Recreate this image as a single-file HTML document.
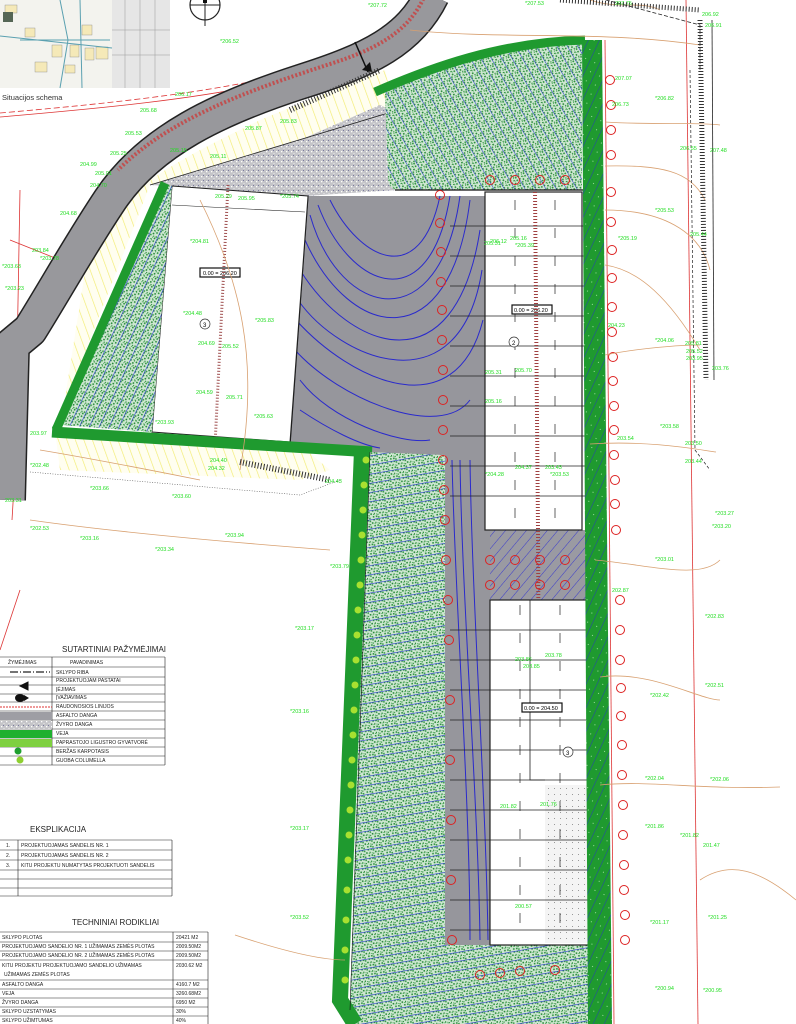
<!DOCTYPE html>
<html><head><meta charset="utf-8"><style>
html,body{margin:0;padding:0;background:#fff;width:796px;height:1024px;overflow:hidden}
svg{display:block}
.g{fill:#22dd22;font-family:"Liberation Sans",sans-serif;font-size:5.5px}
.t{font-family:"Liberation Sans",sans-serif;font-size:5px;fill:#222}
.h{font-family:"Liberation Sans",sans-serif;font-size:8px;fill:#222}
</style></head><body>
<svg width="796" height="1024" viewBox="0 0 796 1024" xmlns="http://www.w3.org/2000/svg">
<defs>
<pattern id="grass" width="6" height="6" patternUnits="userSpaceOnUse">
<rect width="6" height="6" fill="#cfe8d2"/>
<rect x="0" y="0" width="1.6" height="1.6" fill="#2f8f40"/><rect x="3" y="2" width="1.6" height="1.6" fill="#2a8a3a"/>
<rect x="1" y="4" width="1.6" height="1.6" fill="#3a9a4a"/><rect x="4.5" y="4.5" width="1.2" height="1.2" fill="#2a8a3a"/><rect x="4" y="0" width="1" height="1" fill="#4aaa55"/>
</pattern>
<pattern id="hatchA" width="9" height="9" patternUnits="userSpaceOnUse" patternTransform="rotate(25)">
<rect width="9" height="9" fill="url(#grass)"/><line x1="0" y1="0" x2="0" y2="9" stroke="#2233cc" stroke-width="1.2"/>
</pattern>
<pattern id="hatchB" width="9" height="9" patternUnits="userSpaceOnUse" patternTransform="rotate(-30)">
<rect width="9" height="9" fill="url(#grass)"/><line x1="0" y1="0" x2="0" y2="9" stroke="#2233cc" stroke-width="1"/>
</pattern>
<pattern id="hatchC" width="9" height="9" patternUnits="userSpaceOnUse" patternTransform="rotate(80)">
<rect width="9" height="9" fill="url(#grass)"/><line x1="0" y1="0" x2="0" y2="9" stroke="#2233cc" stroke-width="1.2"/>
</pattern>
<pattern id="dg" width="10" height="10" patternUnits="userSpaceOnUse" patternTransform="rotate(25)">
<rect width="10" height="10" fill="#1f9a2f"/><line x1="0" y1="0" x2="0" y2="10" stroke="#2840b0" stroke-width="1"/><rect x="5" y="5" width="1" height="1" fill="#9fe09f"/>
</pattern>
<pattern id="gravel" width="5" height="5" patternUnits="userSpaceOnUse">
<rect width="5" height="5" fill="#c4c4c8"/><rect x="1" y="1" width="1.3" height="1.3" fill="#fff"/><rect x="3.5" y="3" width="1" height="1" fill="#eee"/><rect x="3" y="0" width="1" height="1" fill="#7a7aa0"/>
</pattern>
<pattern id="yel" width="8" height="8" patternUnits="userSpaceOnUse" patternTransform="rotate(-20)">
<rect width="8" height="8" fill="#fffef0"/><line x1="0" y1="0" x2="0" y2="8" stroke="#f2ec70" stroke-width="1.3"/>
</pattern>
<pattern id="gh" width="8" height="8" patternUnits="userSpaceOnUse" patternTransform="rotate(40)">
<rect width="8" height="8" fill="#9a9aa2"/><line x1="0" y1="0" x2="0" y2="8" stroke="#3a3acc" stroke-width="1"/>
</pattern>
<pattern id="dots" width="6" height="6" patternUnits="userSpaceOnUse">
<rect width="6" height="6" fill="#f4f4f4"/><rect x="2" y="2" width="1" height="1" fill="#999"/>
</pattern>
</defs>

<rect x="0" y="0" width="170" height="88" fill="#f3f3ee"/>
<rect x="112" y="0" width="58" height="88" fill="#e6e6e6"/>
<g fill="#f5e9b8" stroke="#888" stroke-width=".4">
<rect x="5" y="5" width="12" height="8"/><rect x="25" y="28" width="10" height="9"/><rect x="52" y="45" width="10" height="12"/><rect x="70" y="45" width="9" height="12"/><rect x="82" y="25" width="10" height="10"/><rect x="85" y="48" width="9" height="12"/><rect x="96" y="47" width="12" height="12"/><rect x="35" y="62" width="12" height="10"/><rect x="65" y="65" width="10" height="8"/>
</g>
<rect x="3" y="12" width="10" height="10" fill="#556655"/>
<g stroke="#5aa0b0" stroke-width="1" fill="none"><path d="M60 0 L68 40 L60 88"/><path d="M20 40 L110 40"/><path d="M80 0 L82 88"/><path d="M0 36 L112 48"/></g>
<g stroke="#999" stroke-width=".5" fill="none"><path d="M125 0V88M140 0V88M155 0V88M112 30H170M112 55H170"/></g>
<text x="2" y="100" font-family="Liberation Sans,sans-serif" font-size="7.5" fill="#333">Situacijos schema</text>

<circle cx="205" cy="5" r="15" fill="none" stroke="#222" stroke-width="1.2"/>
<path d="M190 5H220M205 -12V26" stroke="#222" stroke-width="1"/>
<rect x="203" y="-10" width="4" height="13" fill="#111"/>

<g fill="none" stroke="#dd3333" stroke-width=".8">
<path d="M0 117 C80 110 200 100 280 80 C330 70 390 40 440 0"/>
<path d="M0 113 C80 106 200 95 280 75 C330 62 380 35 430 0" stroke-dasharray="6 3"/>
<path d="M686 0 L698 1024"/>
<path d="M20 190 L15 470 L12 520"/>
<path d="M10 240 L60 260"/>
</g>

<path d="M90 240 C130 180 200 150 260 120 C320 95 360 80 385 70 L395 110 L150 185 L55 430 L60 470 L300 480 L330 470 L300 445 L60 430 Z" fill="url(#yel)"/>
<path d="M150 185 L300 140 L380 105 L395 112 L398 190 L305 196 L172 186 Z" fill="url(#gravel)"/>
<path d="M150 185 L398 110" stroke="#222" stroke-width=".8"/>

<g fill="none" stroke-linejoin="round">
<path d="M432 -5 C410 40 370 60 300 82 C220 108 150 140 110 200 C80 245 55 290 30 330 L12 345 L8 500" stroke="#222" stroke-width="36"/>
<path d="M432 -5 C410 40 370 60 300 82 C220 108 150 140 110 200 C80 245 55 290 30 330 L12 345 L8 500" stroke="#98989c" stroke-width="33"/>
<path d="M425 -5 C410 30 380 48 330 64 C250 90 170 118 118 170" stroke="#c05050" stroke-width="4" stroke-dasharray="2 2"/>
</g>
<path d="M355 42 L368 72" stroke="#111" stroke-width="1.5"/><path d="M362 70 L372 72 L370 62 Z" fill="#111"/>

<path d="M385 92 C430 70 500 45 582 40 L582 190 L400 190 Q388 190 388 178 Z" fill="url(#hatchB)"/>
<path d="M375 92 C430 68 500 42 585 40" fill="none" stroke="#1f9a2f" stroke-width="9"/>
<path d="M395 190 H590" stroke="#111" stroke-width="1.2"/>

<path d="M308 196 L485 196 L485 530 L590 530 L590 600 L490 600 L490 945 L445 945 L445 455 L370 455 L345 448 L290 445 Z" fill="#96969c"/>
<rect x="485" y="530" width="105" height="70" fill="url(#gh)"/>
<rect x="445" y="455" width="45" height="490" fill="#96969c"/>
<g fill="none" stroke="#2a2acc" stroke-width="1">
<path d="M330 200 C360 260 420 290 440 196"/><path d="M318 205 C350 290 430 320 450 196"/><path d="M310 215 C340 320 440 340 460 196"/><path d="M305 240 C350 340 450 360 470 200"/><path d="M300 270 C350 350 455 390 480 230"/><path d="M298 300 C340 360 460 410 482 270"/><path d="M296 320 C350 380 455 430 483 320"/><path d="M295 350 C340 400 440 440 470 400"/><path d="M300 380 C330 420 400 445 430 440"/><path d="M300 410 C330 430 360 445 380 448"/>
<path d="M452 460 C455 600 470 800 470 940"/><path d="M460 460 C462 600 478 800 480 940"/><path d="M470 460 C472 600 486 800 488 940"/>
</g>
<path d="M308 196 L290 445" stroke="#111" stroke-width="1.2"/>
<g fill="#111"><path d="M300 230 l-6 3 6 3z"/><path d="M298 265 l-6 3 6 3z"/><path d="M296 300 l-6 3 6 3z"/><path d="M295 335 l-6 3 6 3z"/><path d="M293 370 l-6 3 6 3z"/><path d="M292 405 l-6 3 6 3z"/></g>

<path d="M172 186 L308 196 L290 442 L152 432 Z" fill="#fff" stroke="#222" stroke-width="1"/>
<path d="M172 205 L305 212" stroke="#222" stroke-width=".6"/>
<rect x="200" y="268" width="40" height="9" fill="#fff" stroke="#111" stroke-width="1.2"/>
<text x="203" y="275" font-family="Liberation Sans,sans-serif" font-size="5.5">0.00 = 206.20</text>
<circle cx="205" cy="324" r="5" fill="#fff" stroke="#333" stroke-width=".7"/><text x="203" y="327" font-family="Liberation Sans" font-size="6">3</text>
<path d="M228 185 L215 445" stroke="#a05050" stroke-width="3" stroke-dasharray="1 2" fill="none"/>

<path d="M165 185 L172 186 L152 432 L60 425 Z" fill="url(#hatchA)"/>
<path d="M165 183 L56 430" stroke="#1f9a2f" stroke-width="9"/>
<path d="M52 432 L372 452" stroke="#1f9a2f" stroke-width="11"/>

<path d="M368 452 L445 455 L445 945 L490 945 L590 945 L590 1024 L345 1024 L350 1000 Z" fill="url(#hatchC)"/>
<path d="M362 450 L340 1000 L355 1024" fill="none" stroke="#1f9a2f" stroke-width="16"/>
<path d="M370 452 L350 1010" stroke="#111" stroke-width=".6"/>
<g fill="#a8e030"><circle cx="366" cy="460" r="3.5"/><circle cx="364" cy="485" r="3.5"/><circle cx="363" cy="510" r="3.5"/><circle cx="362" cy="535" r="3.5"/><circle cx="361" cy="560" r="3.5"/><circle cx="360" cy="585" r="3.5"/><circle cx="358" cy="610" r="3.5"/><circle cx="357" cy="635" r="3.5"/><circle cx="356" cy="660" r="3.5"/><circle cx="355" cy="685" r="3.5"/><circle cx="354" cy="710" r="3.5"/><circle cx="353" cy="735" r="3.5"/><circle cx="352" cy="760" r="3.5"/><circle cx="351" cy="785" r="3.5"/><circle cx="350" cy="810" r="3.5"/><circle cx="349" cy="835" r="3.5"/><circle cx="348" cy="860" r="3.5"/><circle cx="347" cy="890" r="3.5"/><circle cx="346" cy="920" r="3.5"/><circle cx="345" cy="950" r="3.5"/><circle cx="345" cy="980" r="3.5"/></g>

<rect x="485" y="192" width="97" height="338" fill="#fff" stroke="#222" stroke-width="1.2"/>
<g stroke="#222" stroke-width=".7">
<path d="M450 226H600M450 256H600M450 286H600M450 316H600M450 346H600M450 376H600M450 406H600M450 436H600M450 466H600M450 496H600"/>
<path d="M515 200V520M555 200V520" stroke-dasharray="10 18"/>
</g>
<rect x="512" y="305" width="40" height="9" fill="#fff" stroke="#111" stroke-width="1.2"/>
<text x="514" y="312" font-family="Liberation Sans,sans-serif" font-size="5.5">0.00 = 206.20</text>
<circle cx="514" cy="342" r="5" fill="#fff" stroke="#333" stroke-width=".7"/><text x="512" y="345" font-family="Liberation Sans" font-size="6">2</text>
<path d="M535 192 L538 530 L540 945" stroke="#a04040" stroke-width="4" stroke-dasharray="1 2" fill="none"/>

<rect x="490" y="600" width="100" height="345" fill="#fff" stroke="#222" stroke-width="1.2"/>
<rect x="545" y="785" width="45" height="158" fill="url(#dots)"/>
<g stroke="#222" stroke-width=".7">
<path d="M450 630H600M450 660H600M450 690H600M450 720H600M450 750H600M450 780H600M450 810H600M450 840H600M450 870H600M450 900H600M450 930H600"/>
<path d="M520 605V940M560 605V940" stroke-dasharray="10 18"/>
</g>
<path d="M530 600V780H545" fill="none" stroke="#222" stroke-width=".8"/>
<rect x="522" y="703" width="40" height="9" fill="#fff" stroke="#111" stroke-width="1.2"/>
<text x="524" y="710" font-family="Liberation Sans,sans-serif" font-size="5.5">0.00 = 204.50</text>
<circle cx="568" cy="752" r="5" fill="#fff" stroke="#333" stroke-width=".7"/><text x="566" y="755" font-family="Liberation Sans" font-size="6">3</text>

<path d="M582 40 L602 40 L612 1024 L588 1024 Z" fill="url(#dg)"/>
<path d="M605 40 L614 1024" stroke="#dd3333" stroke-width=".8"/>

<g fill="none" stroke="#dd2222" stroke-width="1">
<circle cx="610" cy="80" r="4.5"/><circle cx="611" cy="105" r="4.5"/><circle cx="611" cy="130" r="4.5"/><circle cx="611" cy="155" r="4.5"/><circle cx="611" cy="192" r="4.5"/><circle cx="611" cy="222" r="4.5"/><circle cx="612" cy="250" r="4.5"/><circle cx="612" cy="278" r="4.5"/><circle cx="612" cy="307" r="4.5"/><circle cx="612" cy="332" r="4.5"/><circle cx="613" cy="357" r="4.5"/><circle cx="613" cy="381" r="4.5"/><circle cx="614" cy="406" r="4.5"/><circle cx="614" cy="430" r="4.5"/><circle cx="614" cy="455" r="4.5"/><circle cx="615" cy="480" r="4.5"/><circle cx="615" cy="504" r="4.5"/><circle cx="616" cy="530" r="4.5"/><circle cx="620" cy="600" r="4.5"/><circle cx="620" cy="630" r="4.5"/><circle cx="620" cy="660" r="4.5"/><circle cx="621" cy="688" r="4.5"/><circle cx="621" cy="716" r="4.5"/><circle cx="622" cy="745" r="4.5"/><circle cx="622" cy="775" r="4.5"/><circle cx="623" cy="805" r="4.5"/><circle cx="623" cy="835" r="4.5"/><circle cx="624" cy="865" r="4.5"/><circle cx="624" cy="890" r="4.5"/><circle cx="625" cy="915" r="4.5"/><circle cx="625" cy="940" r="4.5"/>
<circle cx="440" cy="195" r="4.5"/><circle cx="440" cy="223" r="4.5"/><circle cx="441" cy="252" r="4.5"/><circle cx="441" cy="282" r="4.5"/><circle cx="442" cy="310" r="4.5"/><circle cx="442" cy="340" r="4.5"/><circle cx="443" cy="370" r="4.5"/><circle cx="443" cy="400" r="4.5"/><circle cx="443" cy="430" r="4.5"/>
<circle cx="443" cy="460" r="4.5"/><circle cx="444" cy="490" r="4.5"/><circle cx="445" cy="520" r="4.5"/><circle cx="446" cy="560" r="4.5"/><circle cx="448" cy="600" r="4.5"/><circle cx="449" cy="640" r="4.5"/><circle cx="450" cy="700" r="4.5"/><circle cx="450" cy="760" r="4.5"/><circle cx="451" cy="820" r="4.5"/><circle cx="451" cy="880" r="4.5"/><circle cx="452" cy="940" r="4.5"/>
<circle cx="490" cy="180" r="4.5"/><circle cx="515" cy="180" r="4.5"/><circle cx="540" cy="180" r="4.5"/><circle cx="565" cy="180" r="4.5"/>
<circle cx="490" cy="560" r="4.5"/><circle cx="515" cy="560" r="4.5"/><circle cx="540" cy="560" r="4.5"/><circle cx="565" cy="560" r="4.5"/><circle cx="490" cy="585" r="4.5"/><circle cx="515" cy="585" r="4.5"/><circle cx="540" cy="585" r="4.5"/><circle cx="565" cy="585" r="4.5"/>
<circle cx="480" cy="975" r="4.5"/><circle cx="500" cy="973" r="4.5"/><circle cx="520" cy="971" r="4.5"/><circle cx="555" cy="970" r="4.5"/>
</g>

<g fill="none" stroke="#d8a070" stroke-width=".8">
<path d="M590 0 C620 10 640 0 660 10"/><path d="M410 30 C500 40 600 30 700 45"/><path d="M605 122 C650 125 700 122 720 125"/><path d="M605 166 C660 165 690 170 705 200"/><path d="M605 210 C660 210 700 230 710 270"/><path d="M605 265 C640 270 670 300 700 350"/><path d="M605 355 C640 348 680 345 700 345"/><path d="M590 444 C650 440 700 450 716 452"/><path d="M595 560 C650 565 700 580 720 560"/><path d="M600 677 C650 670 700 700 720 700"/><path d="M600 785 C650 780 700 790 780 787"/>
<path d="M40 450 C100 460 150 470 200 480"/><path d="M30 520 C100 530 200 540 330 550"/><path d="M200 200 C240 280 260 360 240 470"/><path d="M700 880 C730 860 760 870 796 900"/><path d="M235 935 C280 950 320 960 345 960"/>
</g>
<path d="M606 0 L700 25 L700 70" fill="none" stroke="#222" stroke-width=".8" stroke-dasharray="4 2"/>
<path d="M700 20 L706 380" stroke="#333" stroke-width="5" stroke-dasharray="1 2"/>
<path d="M712 20 L714 380" stroke="#222" stroke-width=".8"/>
<path d="M690 70 L695 450 L710 470" fill="none" stroke="#222" stroke-width=".7" stroke-dasharray="3 2"/>
<path d="M560 0 L700 10" stroke="#333" stroke-width="5" stroke-dasharray="1 2"/>
<path d="M240 462 L330 480" stroke="#333" stroke-width="6" stroke-dasharray="1 2"/>
<path d="M290 110 L380 70" stroke="#333" stroke-width="6" stroke-dasharray="1 2"/>
<path d="M30 472 L300 495 L340 480" fill="none" stroke="#555" stroke-width=".6" stroke-dasharray="1 1.5"/>

<g class="g">
<text x="368" y="7">*207.72</text><text x="525" y="5">*207.53</text><text x="615" y="5">207.75</text><text x="702" y="16">206.92</text><text x="705" y="27">206.91</text><text x="220" y="43">*206.52</text><text x="615" y="80">207.07</text><text x="612" y="106">206.73</text><text x="655" y="100">*206.82</text><text x="680" y="150">206.55</text><text x="710" y="152">207.48</text><text x="175" y="96">206.17</text><text x="140" y="112">205.68</text><text x="125" y="135">205.53</text><text x="110" y="155">205.25</text><text x="80" y="166">204.99</text><text x="95" y="175">205.01</text><text x="90" y="187">204.70</text><text x="245" y="130">205.87</text><text x="280" y="123">205.83</text><text x="170" y="152">205.15</text><text x="210" y="158">205.11</text><text x="60" y="215">204.68</text><text x="32" y="252">203.84</text><text x="40" y="260">*203.78</text><text x="2" y="268">*203.63</text><text x="5" y="290">*203.23</text><text x="190" y="243">*204.81</text><text x="215" y="198">205.29</text><text x="238" y="200">205.95</text><text x="280" y="198">*205.74</text><text x="183" y="315">*204.48</text><text x="255" y="322">*205.83</text><text x="198" y="345">204.69</text><text x="222" y="348">205.52</text><text x="196" y="394">204.59</text><text x="226" y="399">205.71</text><text x="254" y="418">*205.63</text><text x="155" y="424">*203.93</text><text x="30" y="435">203.97</text><text x="30" y="467">*202.48</text><text x="90" y="490">*203.66</text><text x="172" y="498">*203.60</text><text x="5" y="502">203.31</text><text x="30" y="530">*202.53</text><text x="80" y="540">*203.16</text><text x="155" y="551">*203.34</text><text x="225" y="537">*203.94</text><text x="210" y="462">204.40</text><text x="208" y="470">204.32</text><text x="325" y="483">204.43</text><text x="330" y="568">*203.79</text><text x="295" y="630">*203.17</text><text x="290" y="713">*203.16</text><text x="290" y="830">*203.17</text><text x="290" y="919">*203.52</text>
<text x="618" y="240">*205.19</text><text x="655" y="212">*205.53</text><text x="690" y="236">205.44</text><text x="608" y="327">204.23</text><text x="655" y="342">*204.06</text><text x="685" y="345">205.81</text><text x="686" y="353">205.52</text><text x="686" y="360">203.95</text><text x="712" y="370">203.76</text><text x="660" y="428">*203.58</text><text x="617" y="440">203.54</text><text x="685" y="445">203.50</text><text x="685" y="463">203.44</text><text x="715" y="515">*203.27</text><text x="712" y="528">*203.20</text><text x="655" y="561">*203.01</text><text x="612" y="592">202.87</text><text x="705" y="618">*202.83</text><text x="650" y="697">*202.42</text><text x="705" y="687">*202.51</text><text x="645" y="780">*202.04</text><text x="710" y="781">*202.06</text><text x="645" y="828">*201.86</text><text x="680" y="837">*201.82</text><text x="703" y="847">201.47</text><text x="650" y="924">*201.17</text><text x="708" y="919">*201.25</text><text x="655" y="990">*200.94</text><text x="703" y="992">*200.95</text>
<text x="490" y="243">206.12</text><text x="510" y="240">205.16</text><text x="515" y="247">*205.39</text><text x="484" y="245">205.31</text><text x="485" y="374">205.31</text><text x="515" y="372">205.70</text><text x="485" y="403">205.16</text><text x="515" y="469">204.37</text><text x="545" y="469">203.43</text><text x="485" y="476">*204.28</text><text x="550" y="476">*203.53</text><text x="515" y="661">203.86</text><text x="545" y="657">203.78</text><text x="523" y="668">203.85</text><text x="500" y="808">201.82</text><text x="540" y="806">201.76</text><text x="515" y="908">200.57</text>
</g>

<text class="h" x="62" y="652" font-size="7.5">SUTARTINIAI PAŽYMĖJIMAI</text>
<g stroke="#222" stroke-width=".6" fill="none">
<path d="M0 657H165M0 667H165M0 677H165M0 685H165M0 694H165M0 702H165M0 711H165M0 720H165M0 729H165M0 738H165M0 747H165M0 756H165M0 765H165M52 657V765M165 657V765"/>
</g>
<g class="t" font-size="4.5">
<text x="8" y="664">ŽYMĖJIMAS</text><text x="70" y="664">PAVADINIMAS</text><text x="56" y="674">SKLYPO RIBA</text><text x="56" y="682">PROJEKTUOJAM PASTATAI</text><text x="56" y="691">ĮĖJIMAS</text><text x="56" y="699">ĮVAŽIAVIMAS</text><text x="56" y="708">RAUDONOSIOS LINIJOS</text><text x="56" y="717">ASFALTO DANGA</text><text x="56" y="726">ŽVYRO DANGA</text><text x="56" y="735">VEJA</text><text x="56" y="744">PAPRASTOJO LIGUSTRO GYVATVORĖ</text><text x="56" y="753">BERŽAS KARPOTASIS</text><text x="56" y="762">GUOBA COLUMELLA</text>
</g>
<path d="M10 672H50" stroke="#222" stroke-width="1.2" stroke-dasharray="8 2 1 2"/>
<path d="M20 686l8 -4v8z M28 682v8" fill="#111" stroke="#111"/>
<ellipse cx="20" cy="698" rx="5" ry="4" fill="#111"/><path d="M24 695l5 3 -5 3z" fill="#111"/>
<path d="M0 707H52" stroke="#dd3333" stroke-dasharray="2 1"/>
<rect x="0" y="712" width="52" height="8" fill="#9e9ea4"/>
<rect x="0" y="721" width="52" height="8" fill="url(#gravel)"/>
<rect x="0" y="730" width="52" height="8" fill="#1fb02f"/>
<rect x="0" y="739" width="52" height="8" fill="#7ed040"/>
<circle cx="18" cy="751" r="3.5" fill="#1fa02f"/><circle cx="20" cy="760" r="3.5" fill="#8ed030"/>

<text class="h" x="30" y="832">EKSPLIKACIJA</text>
<g stroke="#222" stroke-width=".6" fill="none"><path d="M0 840H172M0 850H172M0 860H172M0 870H172M0 879H172M0 888H172M0 896H172M18 840V896M172 840V896"/></g>
<g class="t" font-size="4.7"><text x="6" y="847">1.</text><text x="6" y="857">2.</text><text x="6" y="867">3.</text><text x="21" y="847">PROJEKTUOJAMAS SANDELIS NR. 1</text><text x="21" y="857">PROJEKTUOJAMAS SANDELIS NR. 2</text><text x="21" y="867">KITU PROJEKTU NUMATYTAS PROJEKTUOTI SANDELIS</text></g>

<text class="h" x="72" y="925">TECHNINIAI RODIKLIAI</text>
<g stroke="#222" stroke-width=".6" fill="none"><path d="M0 932H208M0 942H208M0 951H208M0 960H208M0 980H208M0 989H208M0 998H208M0 1007H208M0 1016H208M173 932V1024M208 932V1024"/></g>
<g class="t" font-size="4.7">
<text x="2" y="939">SKLYPO PLOTAS</text><text x="176" y="939">20421 M2</text>
<text x="2" y="948">PROJEKTUOJAMO SANDELIO NR. 1 UŽIMAMAS ZEMĖS PLOTAS</text><text x="176" y="948">2009.50M2</text>
<text x="2" y="957">PROJEKTUOJAMO SANDELIO NR. 2 UŽIMAMAS ZEMĖS PLOTAS</text><text x="176" y="957">2009.50M2</text>
<text x="2" y="967">KITU PROJEKTU PROJEKTUOJAMO SANDELIO UŽIMAMAS</text><text x="176" y="967">2030.62 M2</text>
<text x="4" y="976">UŽIMAMAS ZEMĖS PLOTAS</text>
<text x="2" y="986">ASFALTO DANGA</text><text x="176" y="986">4160.7 M2</text>
<text x="2" y="995">VEJA</text><text x="176" y="995">3260.68M2</text>
<text x="2" y="1004">ŽVYRO DANGA</text><text x="176" y="1004">6950 M2</text>
<text x="2" y="1013">SKLYPO UZSTATYMAS</text><text x="176" y="1013">30%</text>
<text x="2" y="1022">SKLYPO UŽIMTUMAS</text><text x="176" y="1022">40%</text>
</g>
<path d="M20 590 L0 650" stroke="#dd3333" stroke-width=".8"/>
</svg>
</body></html>
